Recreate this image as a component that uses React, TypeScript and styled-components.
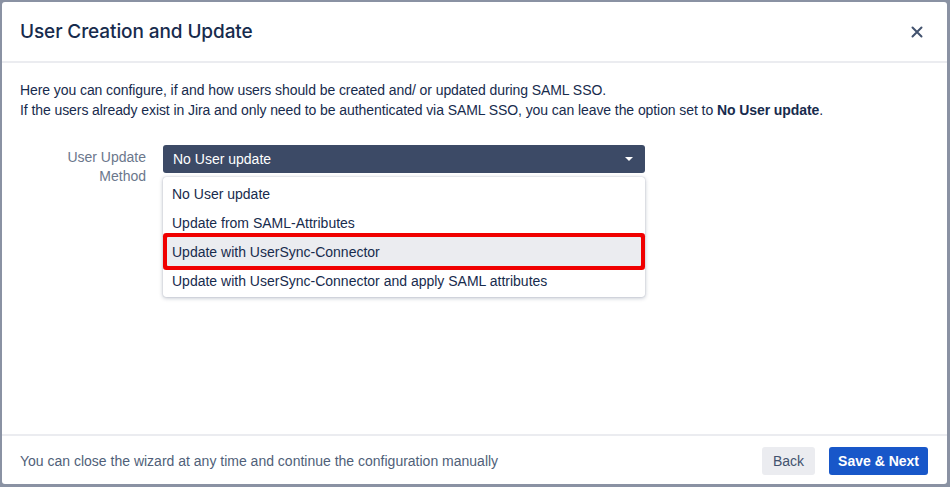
import styled, { createGlobalStyle } from "styled-components";

const GlobalStyle = createGlobalStyle`
    html, body {
        margin: 0;
        padding: 0;
        background: #8a92a3;
    }
    body {
        font-family: "Liberation Sans", Arial, sans-serif;
        color: #172b4d;
    }
`;

const Backdrop = styled.div`
    height: 487px;
    padding: 2px 3px 3px 2px;
    box-sizing: border-box;
`;

const Dialog = styled.div`
    display: flex;
    flex-direction: column;
    height: 100%;
    background: #fff;
    border-radius: 3px;
    overflow: hidden;
`;

const Header = styled.div`
    display: flex;
    align-items: center;
    justify-content: space-between;
    height: 59px;
    padding: 0 18px 0 18px;
    border-bottom: 2px solid #ebecf0;
`;

const Title = styled.h2`
    margin: 0;
    font-family: Inter, "Liberation Sans", sans-serif;
    font-size: 19px;
    font-weight: 500;
    letter-spacing: -0.1px;
    color: #172b4d;
`;

const CloseButton = styled.button`
    display: flex;
    align-items: center;
    justify-content: center;
    width: 24px;
    height: 24px;
    padding: 0;
    border: 0;
    background: none;
    color: #42526e;
    cursor: pointer;
`;

const Body = styled.div`
    flex: 1;
    padding: 17px 18px 0 18px;
`;

const Intro = styled.p`
    margin: 0;
    font-size: 14px;
    line-height: 20px;
    letter-spacing: -0.08px;
    color: #172b4d;
`;

const FieldRow = styled.div`
    display: grid;
    grid-template-columns: 126px 482px;
    column-gap: 17px;
    margin-top: 25px;
`;

const Label = styled.label`
    text-align: right;
    font-size: 14px;
    line-height: 19px;
    color: #6b778c;
    padding-top: 3px;
`;

const SelectWrap = styled.div`
    position: relative;
`;

const SelectBox = styled.div`
    display: flex;
    align-items: center;
    justify-content: space-between;
    height: 28px;
    padding: 0 12px 0 10px;
    border-radius: 3px;
    background: #3c4a66;
    color: #fff;
    font-size: 14px;
`;

const Caret = styled.span`
    width: 0;
    height: 0;
    border-left: 4px solid transparent;
    border-right: 4px solid transparent;
    border-top: 4px solid #fff;
`;

const Menu = styled.ul`
    position: absolute;
    top: 32px;
    left: 0;
    right: 0;
    margin: 0;
    padding: 2px 0;
    list-style: none;
    background: #fff;
    border-radius: 3px;
    box-shadow: 0 1px 4px rgba(9, 30, 66, 0.28), 0 0 1px rgba(9, 30, 66, 0.31);
`;

const MenuItem = styled.li<{ marked?: boolean }>`
    position: relative;
    display: flex;
    align-items: center;
    height: 29px;
    margin: ${p => p.marked ? "0 4px" : "0"};
    padding: ${p => p.marked ? "0 5px" : "0 9px"};
    font-size: 14px;
    color: #172b4d;
    background: ${p => p.marked ? "#ebecf0" : "transparent"};
    box-shadow: ${p => p.marked ? "0 0 0 4px #f00000" : "none"};
    border-radius: 1px;
    z-index: ${p => p.marked ? 1 : 0};
    cursor: pointer;
`;

const Footer = styled.div`
    display: flex;
    align-items: center;
    justify-content: space-between;
    height: 47px;
    padding: 1px 19px 0 18px;
    border-top: 2px solid #ebecf0;
`;

const FooterNote = styled.span`
    font-size: 14px;
    color: #505f79;
`;

const Actions = styled.div`
    display: flex;
    gap: 14px;
`;

const Button = styled.button<{ primary?: boolean }>`
    height: 28px;
    padding: 0 ${p => p.primary ? "9px" : "11px"};
    border: 0;
    border-radius: 3px;
    font-family: inherit;
    font-size: 14px;
    font-weight: ${p => p.primary ? 700 : 400};
    background: ${p => p.primary ? "#1857c9" : "#ebecf0"};
    color: ${p => p.primary ? "#fff" : "#42526e"};
    cursor: pointer;
`;

const options = [
    "No User update",
    "Update from SAML-Attributes",
    "Update with UserSync-Connector",
    "Update with UserSync-Connector and apply SAML attributes",
];

export default function App() {
    return <>
        <GlobalStyle />
        <Backdrop>
            <Dialog>
                <Header>
                    <Title>User Creation and Update</Title>
                    <CloseButton aria-label="Close">
                        <svg width="12" height="12" viewBox="0 0 12 12">
                            <path d="M1.5 1.5 L10.5 10.5 M10.5 1.5 L1.5 10.5" stroke="currentColor" strokeWidth="2" strokeLinecap="round" />
                        </svg>
                    </CloseButton>
                </Header>
                <Body>
                    <Intro>
                        Here you can configure, if and how users should be created and/ or updated during SAML SSO.<br />
                        If the users already exist in Jira and only need to be authenticated via SAML SSO, you can leave the option set to <b>No User update</b>.
                    </Intro>
                    <FieldRow>
                        <Label>User Update<br />Method</Label>
                        <SelectWrap>
                            <SelectBox>
                                No User update
                                <Caret />
                            </SelectBox>
                            <Menu>
                                {options.map((it, i) => <MenuItem key={it} marked={i === 2}>{it}</MenuItem>)}
                            </Menu>
                        </SelectWrap>
                    </FieldRow>
                </Body>
                <Footer>
                    <FooterNote>You can close the wizard at any time and continue the configuration manually</FooterNote>
                    <Actions>
                        <Button>Back</Button>
                        <Button primary>Save &amp; Next</Button>
                    </Actions>
                </Footer>
            </Dialog>
        </Backdrop>
    </>;
}
